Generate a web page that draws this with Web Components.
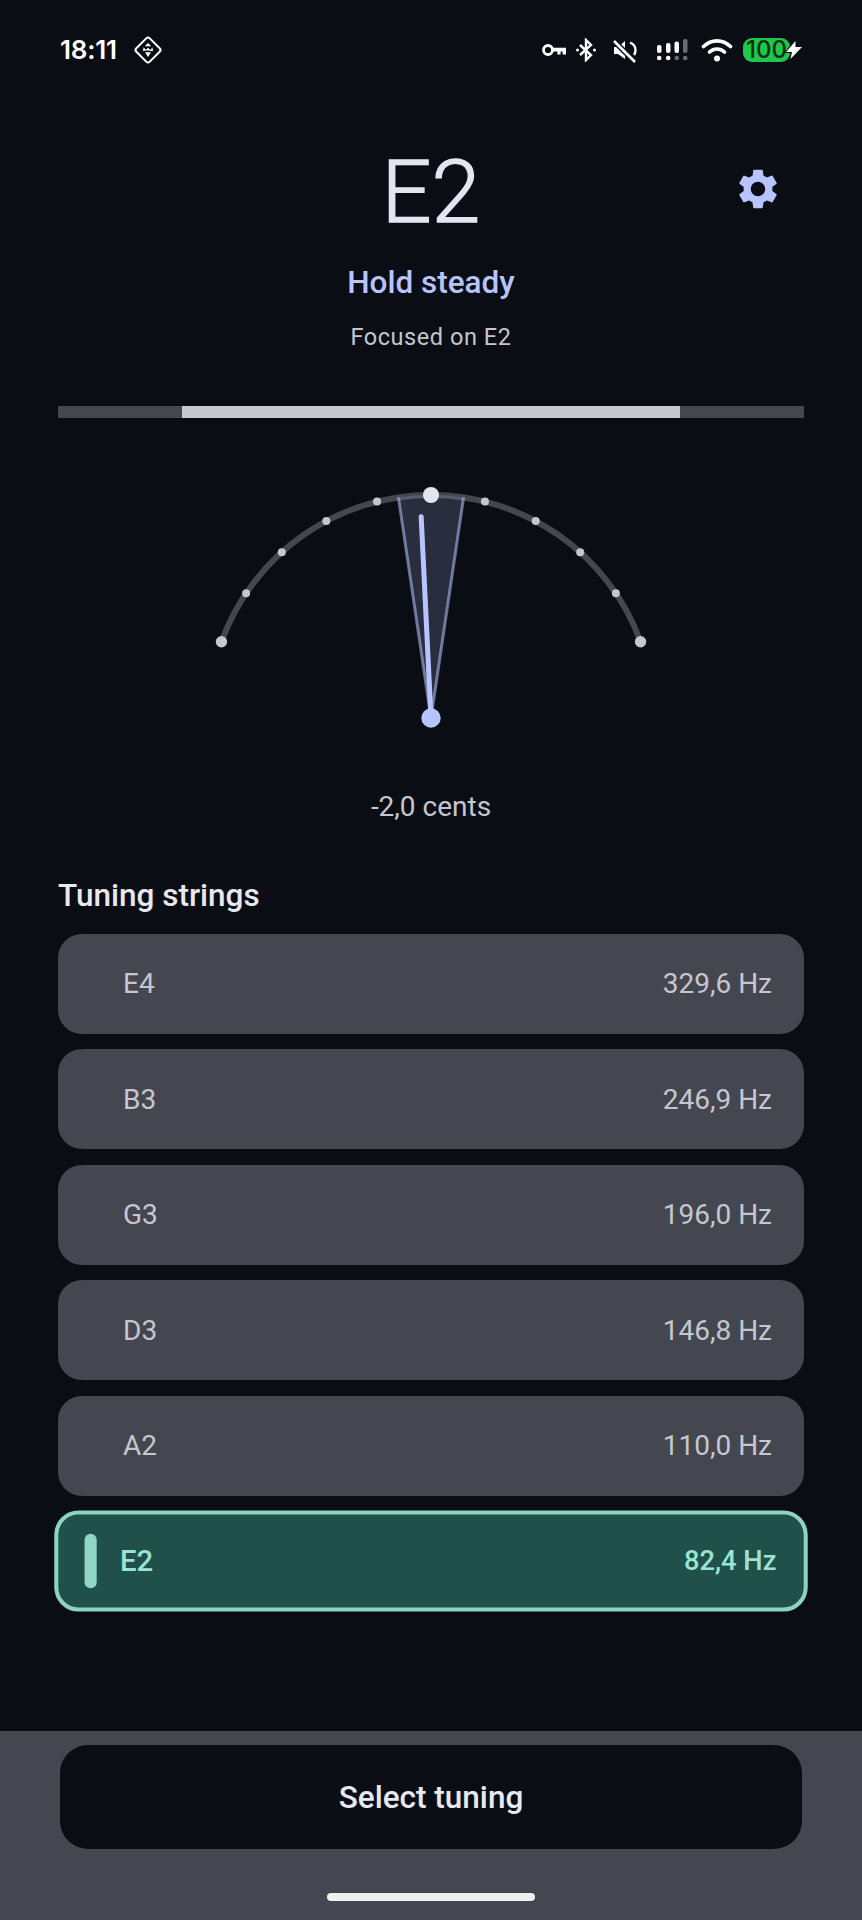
<!DOCTYPE html>
<html>
<head>
<meta charset="utf-8">
<style>
  html, body { margin: 0; background: #0a0d14; }
  body { font-family: Roboto, "Noto Sans", sans-serif; }
</style>
</head>
<body>
<tuner-app>
  <status-bar></status-bar>
  <tuner-header note="E2" status="Hold steady" detail="Focused on E2"></tuner-header>
  <tune-bar></tune-bar>
  <tuner-gauge cents="-2.0" label="-2,0 cents"></tuner-gauge>
  <string-list title="Tuning strings">
    <string-row name="E4" freq="329,6 Hz"></string-row>
    <string-row name="B3" freq="246,9 Hz"></string-row>
    <string-row name="G3" freq="196,0 Hz"></string-row>
    <string-row name="D3" freq="146,8 Hz"></string-row>
    <string-row name="A2" freq="110,0 Hz"></string-row>
    <string-row name="E2" freq="82,4 Hz" active></string-row>
  </string-list>
  <tuning-footer>Select tuning</tuning-footer>
</tuner-app>

<template id="status-tpl">
  <style>
    :host { display: flex; align-items: center; justify-content: space-between; height: 100px; padding: 0 60px; box-sizing: border-box; color: #fff; }
    .left, .right { display: flex; align-items: center; }
    .time { font-family: Inter, Roboto, sans-serif; font-size: 26px; font-weight: 600; line-height: 30px; letter-spacing: -.2px; }
    .left svg { margin-left: 16px; }
    svg { display: block; flex: none; }
    .batt { width: 47px; height: 24.500px; border-radius: 9px; background: #1fc74c; color: #0b3016; font-family: Inter, Roboto, sans-serif; font-size: 24px; font-weight: 500; line-height: 24.500px; text-align: center; }
    .bolt { overflow: visible; }
  </style>
  <div class="left">
    <span class="time">18:11</span>
    <svg width="30" height="30" viewBox="0 0 30 30" fill="none" stroke="#fff">
      <rect x="5.500" y="5.500" width="19" height="19" rx="2.500" stroke-width="2" transform="rotate(45 15 15)"/>
      <path d="M15 8l3.200 3.200h-6.400zM10.500 12.300l3 3-3.500.6zM19.500 12.300l.5 3.600h-3.500zM15 12.800l2.800 2.800h-5.600zM12 17.200h6L15 22z" fill="#fff" stroke="none"/>
    </svg>
  </div>
  <div class="right">
    <svg width="24" height="12" viewBox="0 0 24 12" fill="none">
      <circle cx="6" cy="6" r="4.500" stroke="#fff" stroke-width="2.800"/>
      <path d="M11 3.800h13v6.700h-3.400V7.500h-2v3h-3.200v-3H11z" fill="#fff"/>
    </svg>
    <svg style="margin-left:10px" width="20" height="24" viewBox="0 0 20 24" fill="none" stroke="#fff" stroke-width="2.400">
      <path d="M4 7l11 10-5 5V2l5 5L4 17"/>
      <circle cx="1.500" cy="12" r="1.500" fill="#fff" stroke="none"/>
      <circle cx="18.500" cy="12" r="1.500" fill="#fff" stroke="none"/>
    </svg>
    <svg style="margin-left:15px" width="26" height="26" viewBox="0 0 26 26" fill="none">
      <path d="M3 10h4l7-6v18l-7-5H3z" fill="#fff"/>
      <path d="M19 5.500c3.600 1.500 5.500 4.500 5.500 7.500 0 1.800-.4 3.400-1.400 5" stroke="#fff" stroke-width="2.400"/>
      <path d="M3 4l21 21" stroke="#0a0d14" stroke-width="5.500"/>
      <path d="M3 4l21 21" stroke="#fff" stroke-width="2.600"/>
    </svg>
    <svg style="margin-left:19px" width="33" height="26" viewBox="0 0 33 26">
      <g fill="#fff">
        <rect x="1" y="8" width="4.500" height="8" rx="2"/><circle cx="3.200" cy="21" r="2.300"/>
        <rect x="10" y="6" width="4.500" height="10" rx="2"/><circle cx="12.200" cy="21" r="2.300"/>
        <rect x="18.500" y="4.500" width="4.500" height="11.500" rx="2"/>
      </g>
      <g fill="#6a6c72">
        <circle cx="20.800" cy="21" r="2.300"/>
        <rect x="27" y="2" width="4.500" height="14" rx="2"/><circle cx="29.200" cy="21" r="2.300"/>
      </g>
    </svg>
    <svg style="margin-left:12px" width="32" height="24" viewBox="0 0 32 24" fill="none" stroke="#fff" stroke-width="3.600" stroke-linecap="round">
      <path d="M2.500 8.500c8-7.500 19-7.500 27 0"/>
      <path d="M8.500 14c4.500-4 10.500-4 15 0"/>
      <circle cx="16" cy="20.500" r="3" fill="#fff" stroke="none"/>
    </svg>
    <div class="batt" style="margin-left:10px">100</div>
    <svg class="bolt" style="margin-left:-4px" width="16" height="18" viewBox="0 0 16 18">
      <path d="M9.500 0L0 11h6L4.500 18 16 6H9.500z" fill="#fff" stroke="#0a0d14" stroke-width="2" paint-order="stroke"/>
    </svg>
  </div>
</template>

<template id="header-tpl">
  <style>
    :host { display: grid; grid-template-columns: 1fr auto 1fr; height: 306px; box-sizing: border-box; }
    .mid { display: flex; flex-direction: column; align-items: center; }
    .note { font-size: 88px; font-weight: 300; -webkit-text-stroke: 1.300px #e2e6f2; line-height: 104px; color: #e2e6f2; margin-top: 40px; }
    .status { font-size: 31.500px; font-weight: 500; line-height: 36px; color: #b8c4ff; margin-top: 21px; }
    .detail { font-size: 23.500px; line-height: 28px; letter-spacing: .55px; color: #c5c6d0; margin-top: 22px; }
    .gear { justify-self: end; margin: 65px 80px 0 0; width: 48px; height: 48px; fill: #b8c4ff; }
  </style>
  <span></span>
  <div class="mid">
    <div class="note"></div>
    <div class="status"></div>
    <div class="detail"></div>
  </div>
  <svg class="gear" viewBox="0 0 24 24"><path d="M19.140 12.940c.04-.3.06-.61.06-.94 0-.32-.02-.64-.07-.94l2.030-1.580c.18-.14.23-.41.12-.61l-1.920-3.320c-.12-.22-.37-.29-.59-.22l-2.390.96c-.5-.38-1.030-.7-1.620-.94L14.400 2.810c-.04-.24-.24-.41-.48-.41h-3.840c-.24 0-.43.17-.47.41L9.250 5.350c-.59.24-1.130.57-1.620.94L5.240 5.330c-.22-.08-.47 0-.59.22L2.740 8.870c-.12.21-.08.47.12.61l2.030 1.580c-.05.3-.09.63-.09.94s.02.64.07.94l-2.030 1.580c-.18.14-.23.41-.12.61l1.920 3.320c.12.22.37.29.59.22l2.390-.96c.5.38 1.030.7 1.620.94l.36 2.540c.05.24.24.41.48.41h3.840c.24 0 .44-.17.47-.41l.36-2.540c.59-.24 1.130-.56 1.620-.94l2.390.96c.22.08.47 0 .59-.22l1.920-3.320c.12-.22.07-.47-.12-.61l-2.010-1.580zM12 15.600c-1.980 0-3.600-1.620-3.600-3.600s1.620-3.600 3.600-3.600 3.600 1.620 3.600 3.600-1.620 3.600-3.600 3.600z"/></svg>
</template>

<template id="bar-tpl">
  <style>
    :host { display: block; height: 12px; margin: 0 58px; background: #44474f; }
    div { height: 100%; margin: 0 124px; background: #c5c6d0; }
  </style>
  <div></div>
</template>

<template id="gauge-tpl">
  <style>
    :host { display: block; height: 458.500px; box-sizing: border-box; padding-top: 50px; text-align: center; }
    svg { display: block; margin: 0 auto; }
    .label { font-size: 28px; line-height: 32px; color: #c5c6d0; margin-top: 63px; }
  </style>
  <svg width="460" height="260" viewBox="0 0 460 260"></svg>
  <div class="label"></div>
</template>

<template id="list-tpl">
  <style>
    :host { display: block; padding: 0 58px; }
    h2 { margin: 0 0 19px; font-size: 31.500px; font-weight: 500; line-height: 38px; color: #e8e8ee; }
    .rows { display: flex; flex-direction: column; gap: 15.500px; }
  </style>
  <h2></h2>
  <div class="rows"><slot></slot></div>
</template>

<template id="row-tpl">
  <style>
    :host { display: flex; align-items: center; height: 100px; box-sizing: border-box; padding: 0 32px 0 65px; border-radius: 24px; background: #44474f; color: #c5c6d0; font-size: 28px; }
    .name { flex: 1; }
    :host([active]) { background: #1f504a; color: #9ce3d2; font-weight: 500; border: 4px solid #8cd3c3; padding: 0 27px 0 26px; transform: scale(1.01); }
    :host([active]) .name { font-size: 29px; }
    :host([active]) .freq { font-size: 27px; }
    .mark { display: none; width: 12px; height: 54px; border-radius: 6px; background: #8fd6c6; margin-right: 23px; }
    :host([active]) .mark { display: block; }
  </style>
  <div class="mark"></div>
  <span class="name"></span>
  <span class="freq"></span>
</template>

<template id="footer-tpl">
  <style>
    :host { display: block; position: absolute; left: 0; right: 0; top: 1731px; height: 189px; box-sizing: border-box; padding: 14px 60px 0; background: #44474f; }
    button { display: block; width: 100%; height: 104px; border: 0; border-radius: 28px; background: #0a0d14; color: #e6e9f3; font: 500 31.500px Roboto, sans-serif; }
    .home { width: 208px; height: 8px; border-radius: 4px; background: #eff1f0; margin: 44px auto 0; }
  </style>
  <button><slot></slot></button>
  <div class="home"></div>
</template>

<script>
  function stamp(el, id) {
    const root = el.attachShadow({mode: 'open'});
    root.appendChild(document.getElementById(id).content.cloneNode(true));
    return root;
  }

  class TunerApp extends HTMLElement {
    constructor() {
      super();
      const root = this.attachShadow({mode: 'open'});
      root.innerHTML = '<style>:host{display:block;position:relative;height:1920px;overflow:hidden}</style><slot></slot>';
    }
  }

  class StatusBar extends HTMLElement {
    constructor() { super(); stamp(this, 'status-tpl'); }
  }

  class TunerHeader extends HTMLElement {
    constructor() { super(); stamp(this, 'header-tpl'); }
    connectedCallback() {
      const r = this.shadowRoot;
      r.querySelector('.note').textContent = this.getAttribute('note');
      r.querySelector('.status').textContent = this.getAttribute('status');
      r.querySelector('.detail').textContent = this.getAttribute('detail');
    }
  }

  class TuneBar extends HTMLElement {
    constructor() { super(); stamp(this, 'bar-tpl'); }
  }

  class TunerGauge extends HTMLElement {
    constructor() { super(); stamp(this, 'gauge-tpl'); }
    connectedCallback() {
      // pivot sits at 230,250 in the svg, angles in degrees from straight up
      const R = 223, cx = 230, cy = 250;
      const pt = (deg, r) => {
        const a = deg * Math.PI / 180;
        return [cx + r * Math.sin(a), cy - r * Math.cos(a)];
      };
      const s = pt(-70, R), e = pt(70, R);
      const wl = pt(-8.4, R), wr = pt(8.4, R);
      const tip = pt(parseFloat(this.getAttribute('cents')) * 1.4, 201.5);
      let ticks = '';
      for (const d of [-56, -42, -28, -14, 14, 28, 42, 56]) {
        const p = pt(d, R);
        ticks += `<circle cx="${p[0]}" cy="${p[1]}" r="4" fill="#c5c6d0"/>`;
      }
      this.shadowRoot.querySelector('svg').innerHTML = `
        <path d="M${s[0]} ${s[1]}A${R} ${R} 0 0 1 ${e[0]} ${e[1]}" fill="none" stroke="#44474f" stroke-width="6"/>
        <path d="M${cx} ${cy}L${wl[0]} ${wl[1]}A${R} ${R} 0 0 1 ${wr[0]} ${wr[1]}Z" fill="#b8c4ff" fill-opacity=".18"/>
        <path d="M${wl[0]} ${wl[1]}L${cx} ${cy}L${wr[0]} ${wr[1]}" fill="none" stroke="#b8c4ff" stroke-opacity=".55" stroke-width="3"/>
        ${ticks}
        <circle cx="${s[0]}" cy="${s[1]}" r="5.700" fill="#c5c6d0"/>
        <circle cx="${e[0]}" cy="${e[1]}" r="5.700" fill="#c5c6d0"/>
        <path d="M${cx} ${cy}L${tip[0]} ${tip[1]}" stroke="#b8c4ff" stroke-width="5" stroke-linecap="round"/>
        <circle cx="${cx}" cy="${cy - R}" r="8" fill="#e2e6f2"/>
        <circle cx="${cx}" cy="${cy}" r="9.700" fill="#b8c4ff"/>`;
      this.shadowRoot.querySelector('.label').textContent = this.getAttribute('label');
    }
  }

  class StringList extends HTMLElement {
    constructor() { super(); stamp(this, 'list-tpl'); }
    connectedCallback() {
      this.shadowRoot.querySelector('h2').textContent = this.getAttribute('title');
    }
  }

  class StringRow extends HTMLElement {
    constructor() { super(); stamp(this, 'row-tpl'); }
    connectedCallback() {
      this.shadowRoot.querySelector('.name').textContent = this.getAttribute('name');
      this.shadowRoot.querySelector('.freq').textContent = this.getAttribute('freq');
    }
  }

  class TuningFooter extends HTMLElement {
    constructor() { super(); stamp(this, 'footer-tpl'); }
  }

  customElements.define('tuner-app', TunerApp);
  customElements.define('status-bar', StatusBar);
  customElements.define('tuner-header', TunerHeader);
  customElements.define('tune-bar', TuneBar);
  customElements.define('tuner-gauge', TunerGauge);
  customElements.define('string-list', StringList);
  customElements.define('string-row', StringRow);
  customElements.define('tuning-footer', TuningFooter);
</script>
</body>
</html>
